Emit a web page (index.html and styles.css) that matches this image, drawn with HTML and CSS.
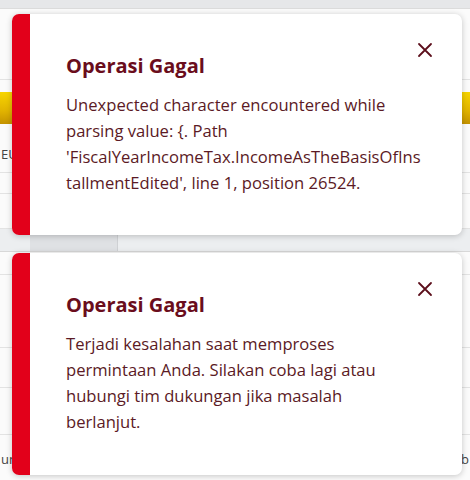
FILE: index.html
```html
<!DOCTYPE html>
<html>
<head>
<meta charset="utf-8">
<link rel="stylesheet" href="styles.css">
</head>
<body>
<div class="page">
  <div class="topbar"></div>
  <div class="row r1"></div>
  <div class="row yellow-row"><div class="yellow"></div></div>
  <div class="row r2"><span class="eu">EUR</span></div>
  <div class="row r3"></div>
  <div class="row r4"></div>
  <div class="grayband"><div class="btn"></div></div>
  <div class="row r5"></div>
  <div class="row r6"></div>
  <div class="row r7"></div>
  <div class="row r8"></div>
  <div class="row r9"><span class="un">und</span><span class="b">b</span></div>
</div>

<div class="toasts">
  <div class="toast">
    <div class="bar"></div>
    <div class="content">
      <div class="title">Operasi Gagal</div>
      <div class="msg">Unexpected character encountered while parsing value: {. Path 'FiscalYearIncomeTax.IncomeAsTheBasisOfInstallmentEdited', line 1, position 26524.</div>
    </div>
    <svg class="close" viewBox="0 0 16 16" width="16" height="16"><path d="M2 2 L14 14 M14 2 L2 14" stroke="#5c0f1c" stroke-width="1.8" fill="none" stroke-linecap="round"/></svg>
  </div>
  <div class="toast">
    <div class="bar"></div>
    <div class="content">
      <div class="title">Operasi Gagal</div>
      <div class="msg">Terjadi kesalahan saat memproses permintaan Anda. Silakan coba lagi atau hubungi tim dukungan jika masalah<br>berlanjut.</div>
    </div>
    <svg class="close" viewBox="0 0 16 16" width="16" height="16"><path d="M2 2 L14 14 M14 2 L2 14" stroke="#5c0f1c" stroke-width="1.8" fill="none" stroke-linecap="round"/></svg>
  </div>
</div>
</body>
</html>
```

FILE: styles.css
```css
html, body {
  margin: 0;
  padding: 0;
}
body {
  width: 470px;
  height: 480px;
  overflow: hidden;
  position: relative;
  background: #f7f7f8;
  font-family: "Open Sans", "Noto Sans", sans-serif;
}
.page {
  display: flex;
  flex-direction: column;
}
.topbar {
  height: 8px;
  background: #e6e7e9;
  border-bottom: 1px solid #dcdcdc;
}
.row {
  border-bottom: 1px solid #e3e3e3;
  background: #fbfbfb;
  position: relative;
}
.r1 { height: 70px; }
.yellow-row { height: 56px; display: flex; align-items: center; border-bottom: none; }
.yellow {
  height: 32px;
  width: 100%;
  background: linear-gradient(180deg, #f7d500 0%, #e1b300 60%, #c49300 100%);
}
.r2 { height: 36px; display: flex; align-items: center; }
.eu {
  font-size: 13px;
  color: #444;
  margin-left: 1px;
}
.r3 { height: 20px; }
.r4 { height: 34px; }
.grayband {
  height: 22px;
  background: #eceef0;
  border-bottom: 1px solid #d8d8d8;
  display: flex;
}
.btn {
  margin-left: 30px;
  width: 87px;
  background: #dfe1e4;
  border-right: 1px solid #cfd1d4;
}
.r5 { height: 22px; }
.r6 { height: 72px; }
.r7 { height: 39px; }
.r8 { height: 46px; }
.r9 {
  height: 48px;
  border-bottom: none;
  display: flex;
  align-items: center;
  justify-content: space-between;
  font-size: 13px;
  color: #444;
}
.un { margin-left: 1px; }
.b { margin-right: 1px; }

.toasts {
  position: absolute;
  left: 12px;
  top: 14px;
  width: 450px;
  display: flex;
  flex-direction: column;
  gap: 18px;
}
.toast {
  position: relative;
  display: flex;
  min-height: 221px;
  background: #fff;
  border-radius: 7px;
  overflow: hidden;
  box-shadow: 0 1px 6px rgba(0, 0, 0, 0.22);
}
.toast + .toast { min-height: 222px; }
.bar {
  width: 18px;
  flex: none;
  background: #e2001a;
}
.content {
  padding: 38px 0 20px 36px;
  flex: 1;
  min-width: 0;
}
.title {
  font-size: 20px;
  line-height: 28px;
  font-weight: 700;
  color: #6a0d1c;
}
.msg {
  width: 356px;
  margin-top: 12px;
  font-size: 16.6px;
  line-height: 26px;
  color: #5b1a25;
  overflow-wrap: anywhere;
}
.close {
  position: absolute;
  right: 29px;
  top: 28px;
}
```
